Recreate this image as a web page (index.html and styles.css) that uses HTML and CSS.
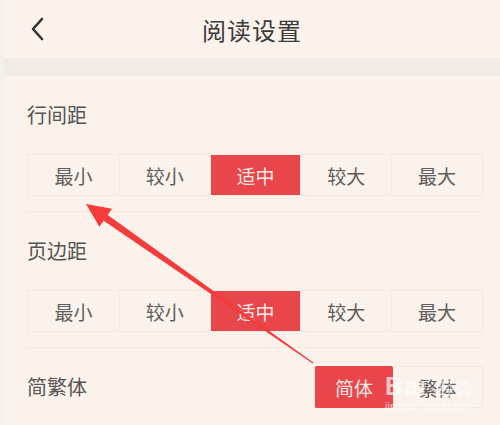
FILE: index.html
```html
<!DOCTYPE html>
<html>
  <head>
    <title>阅读设置</title>
    <link rel="stylesheet" href="styles.css">
  </head>
  <body>
    <div class="page">
      <div class="header">
        <svg class="back" width="14" height="24" viewBox="0 0 14 24">
          <path d="M12 2 L3 12 L12 22" fill="none" stroke="#333" stroke-width="2.6" stroke-linecap="round" stroke-linejoin="round"/>
        </svg>
        <h1>阅读设置</h1>
      </div>
      <div class="band"></div>

      <div class="group">
        <div class="label">行间距</div>
        <div class="seg">
          <div>最小</div>
          <div>较小</div>
          <div class="on">适中</div>
          <div>较大</div>
          <div>最大</div>
        </div>
      </div>

      <div class="group">
        <div class="label">页边距</div>
        <div class="seg">
          <div>最小</div>
          <div>较小</div>
          <div class="on">适中</div>
          <div>较大</div>
          <div>最大</div>
        </div>
      </div>

      <div class="group-row">
        <div class="label">简繁体</div>
        <div class="pair">
          <div class="on simp">简体</div>
          <div class="trad">繁体</div>
        </div>
      </div>
    </div>

    <svg class="arrow" width="500" height="425" viewBox="0 0 500 425">
      <polygon points="86,204 112,208.8 107.7,214.9 313.3,362.5 312.7,363.5 103.7,220.7 99.4,226.8" fill="#f53b3b"/>
    </svg>

    <div class="mark">
      <span class="bai">Bai</span><span class="paw">&#9679;</span><span class="jy">经验</span>
      <div class="url">jingyan.baidu.com</div>
    </div>
  </body>
</html>
```

FILE: styles.css
```css
body{
  margin: 0;
  background: #f3f0ee;
  font-family: "Noto Sans CJK SC", "Noto Sans", sans-serif;
  color: #555;
}

.page{
  margin-left: 4px;
  height: 425px;
  background: #fbf2eb;
  overflow: hidden;
}

.header{
  height: 58px;
  display: flex;
  align-items: center;
  justify-content: center;
  position: relative;
}

.header h1{
  margin: 0;
  font-size: 24px;
  font-weight: normal;
  color: #3a3a3a;
  letter-spacing: 1px;
}

.back{
  position: absolute;
  left: 26px;
  top: 17px;
}

.band{
  height: 18px;
  background: #f0ebe5;
}

.group{
  margin: 0 17px 0 23px;
  padding: 24px 0 15px;
  border-bottom: 1px solid #f3e9e0;
}

.label{
  font-size: 20px;
  line-height: 30px;
  color: #555;
}

.group .label{
  margin-bottom: 24px;
}

.seg{
  display: grid;
  grid-template-columns: repeat(5, 1fr);
  height: 42px;
  border: 1px solid #f3e9e0;
  box-sizing: border-box;
}

.seg div, .pair div{
  display: flex;
  align-items: center;
  justify-content: center;
  font-size: 19px;
  color: #5e5e5e;
  border-left: 1px solid #f3e9e0;
}

.seg div:first-child{
  border-left: none;
}

.on{
  background: #e8464a;
  color: #fde9e6 !important;
}

.group-row{
  margin: 0 17px 0 23px;
  padding-top: 18px;
  display: flex;
  align-items: center;
  justify-content: space-between;
}

.pair{
  display: flex;
  height: 42px;
}

.simp{
  width: 78px;
  border-radius: 2px;
}

.trad{
  width: 89px;
  border: 1px solid #f3e9e0;
  border-left: none !important;
}

.arrow{
  position: absolute;
  left: 0;
  top: 0;
  pointer-events: none;
}

.mark{
  position: absolute;
  left: 385px;
  top: 374px;
  color: rgba(255, 255, 255, 0.7);
  font-family: "Liberation Sans", sans-serif;
  line-height: 1;
}

.bai{
  font-size: 25px;
  font-weight: bold;
  letter-spacing: 1px;
}

.paw{
  font-size: 18px;
  color: rgba(120, 110, 110, 0.3);
}

.jy{
  font-size: 17px;
  font-family: "Noto Sans CJK SC", sans-serif;
}

.url{
  font-size: 11px;
  margin-top: 2px;
}
```
